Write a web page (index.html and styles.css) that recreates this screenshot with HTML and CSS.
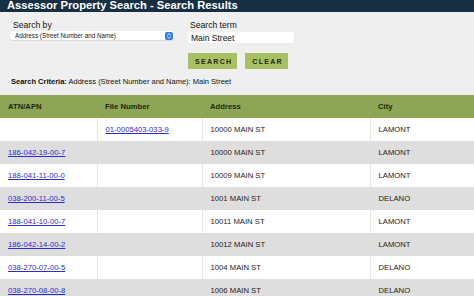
FILE: index.html
```html
<!DOCTYPE html>
<html lang="en">
<head>
  <meta charset="UTF-8">
  <title>Assessor Property Search - Search Results</title>
  <link rel="stylesheet" href="styles.css">
</head>
<body>

  <header class="page-title">
    <h1>Assessor Property Search - Search Results</h1>
  </header>

  <section class="search-panel">
    <div class="search-fields">
      <div class="field field-by">
        <label for="searchBy">Search by</label>
        <div class="select-wrap">
          <select id="searchBy">
            <option>Address (Street Number and Name)</option>
            <option>ATN/APN</option>
            <option>File Number</option>
          </select>
          <svg class="select-arrows" viewBox="0 0 8 8" width="8" height="8">
            <rect width="8" height="8" rx="2" fill="#2f7bf3"/>
            <path d="M2.3 3.2 L4 1.6 L5.7 3.2 M2.3 4.8 L4 6.4 L5.7 4.8" fill="none" stroke="#fff" stroke-width="0.9"/>
          </svg>
        </div>
      </div>
      <div class="field field-term">
        <label for="searchTerm">Search term</label>
        <input id="searchTerm" type="text" value="Main Street">
        <div class="actions">
          <button class="btn">SEARCH</button>
          <button class="btn">CLEAR</button>
        </div>
      </div>
    </div>
    <p class="criteria"><b>Search Criteria:</b> Address (Street Number and Name): Main Street</p>
  </section>

  <table class="results">
    <colgroup>
      <col class="col-apn">
      <col class="col-file">
      <col class="col-addr">
      <col class="col-city">
    </colgroup>
    <thead>
      <tr>
        <th>ATN/APN</th>
        <th>File Number</th>
        <th>Address</th>
        <th>City</th>
      </tr>
    </thead>
    <tbody>
      <tr>
        <td></td>
        <td><a href="#">01-0005403-033-9</a></td>
        <td>10000 MAIN ST</td>
        <td>LAMONT</td>
      </tr>
      <tr>
        <td><a href="#">186-042-19-00-7</a></td>
        <td></td>
        <td>10000 MAIN ST</td>
        <td>LAMONT</td>
      </tr>
      <tr>
        <td><a href="#">188-041-11-00-0</a></td>
        <td></td>
        <td>10009 MAIN ST</td>
        <td>LAMONT</td>
      </tr>
      <tr>
        <td><a href="#">038-200-11-00-5</a></td>
        <td></td>
        <td>1001 MAIN ST</td>
        <td>DELANO</td>
      </tr>
      <tr>
        <td><a href="#">188-041-10-00-7</a></td>
        <td></td>
        <td>10011 MAIN ST</td>
        <td>LAMONT</td>
      </tr>
      <tr>
        <td><a href="#">186-042-14-00-2</a></td>
        <td></td>
        <td>10012 MAIN ST</td>
        <td>LAMONT</td>
      </tr>
      <tr>
        <td><a href="#">038-270-07-00-5</a></td>
        <td></td>
        <td>1004 MAIN ST</td>
        <td>DELANO</td>
      </tr>
      <tr>
        <td><a href="#">038-270-08-00-8</a></td>
        <td></td>
        <td>1006 MAIN ST</td>
        <td>DELANO</td>
      </tr>
    </tbody>
  </table>

</body>
</html>
```

FILE: styles.css
```css
* {
  box-sizing: border-box;
  margin: 0;
  padding: 0;
}

body {
  width: 474px;
  height: 296px;
  overflow: hidden;
  font-family: 'Liberation Sans', Arial, sans-serif;
  color: #222;
  background: #fff;
}

.page-title {
  height: 12px;
  overflow: hidden;
  background: #172f43;
  padding-left: 7px;
}

.page-title h1 {
  font-size: 11.2px;
  line-height: 11px;
  font-weight: bold;
  color: #fff;
}

.search-panel {
  background: #efefef;
  padding: 8px 0 8px 0;
}

.search-fields {
  display: flex;
}

.field label {
  display: block;
  font-size: 8.6px;
  line-height: 10px;
  color: #111;
}

.field-by {
  margin-left: 10px;
  width: 164px;
}

.field-by label {
  padding-left: 3px;
}

.select-wrap {
  position: relative;
  margin-top: 1px;
}

.select-wrap select {
  appearance: none;
  -webkit-appearance: none;
  display: block;
  width: 164px;
  height: 9px;
  border: none;
  border-radius: 3px;
  background: #fff;
  box-shadow: 0 0.5px 1px rgba(0, 0, 0, 0.15);
  font-family: inherit;
  font-size: 6.3px;
  line-height: 9px;
  padding: 0 0 0 5px;
  color: #222;
}

.select-arrows {
  position: absolute;
  right: 1px;
  top: 0.5px;
}

.field-term {
  margin-left: 14px;
  width: 106px;
}

.field-term label {
  padding-left: 2px;
}

.field-term input {
  display: block;
  width: 106px;
  height: 11px;
  margin-top: 2px;
  border: none;
  border-radius: 2px;
  background: #fff;
  font-family: inherit;
  font-size: 8.5px;
  padding: 0 3px;
  color: #111;
}

.actions {
  display: flex;
  gap: 8px;
  margin-top: 10px;
}

.btn {
  height: 16px;
  padding: 0 5px 0 7px;
  border: none;
  background: #a9c062;
  color: #1e2b12;
  font-family: inherit;
  font-weight: bold;
  font-size: 7px;
  letter-spacing: 1.3px;
}

.criteria {
  margin: 8px 0 0 11px;
  font-size: 7.5px;
  line-height: 10px;
  color: #111;
}

.results {
  width: 474px;
  border-collapse: collapse;
  table-layout: fixed;
  font-size: 7.7px;
}

.col-apn { width: 97px; }
.col-file { width: 105px; }
.col-addr { width: 168px; }
.col-city { width: 104px; }

.results th {
  background: #8ca655;
  color: #1b2610;
  text-align: left;
  font-weight: bold;
  height: 23px;
  padding: 0 8px;
}

.results td {
  height: 23px;
  padding: 0 8px;
  border-left: 1px solid #e6e6e6;
  white-space: nowrap;
}

.results td:first-child {
  border-left: none;
}

.results tbody tr:nth-child(even) td {
  background: #dedede;
  border-left-color: #dedede;
}

.results a {
  color: #2b2bd3;
  text-decoration: underline;
}
```
